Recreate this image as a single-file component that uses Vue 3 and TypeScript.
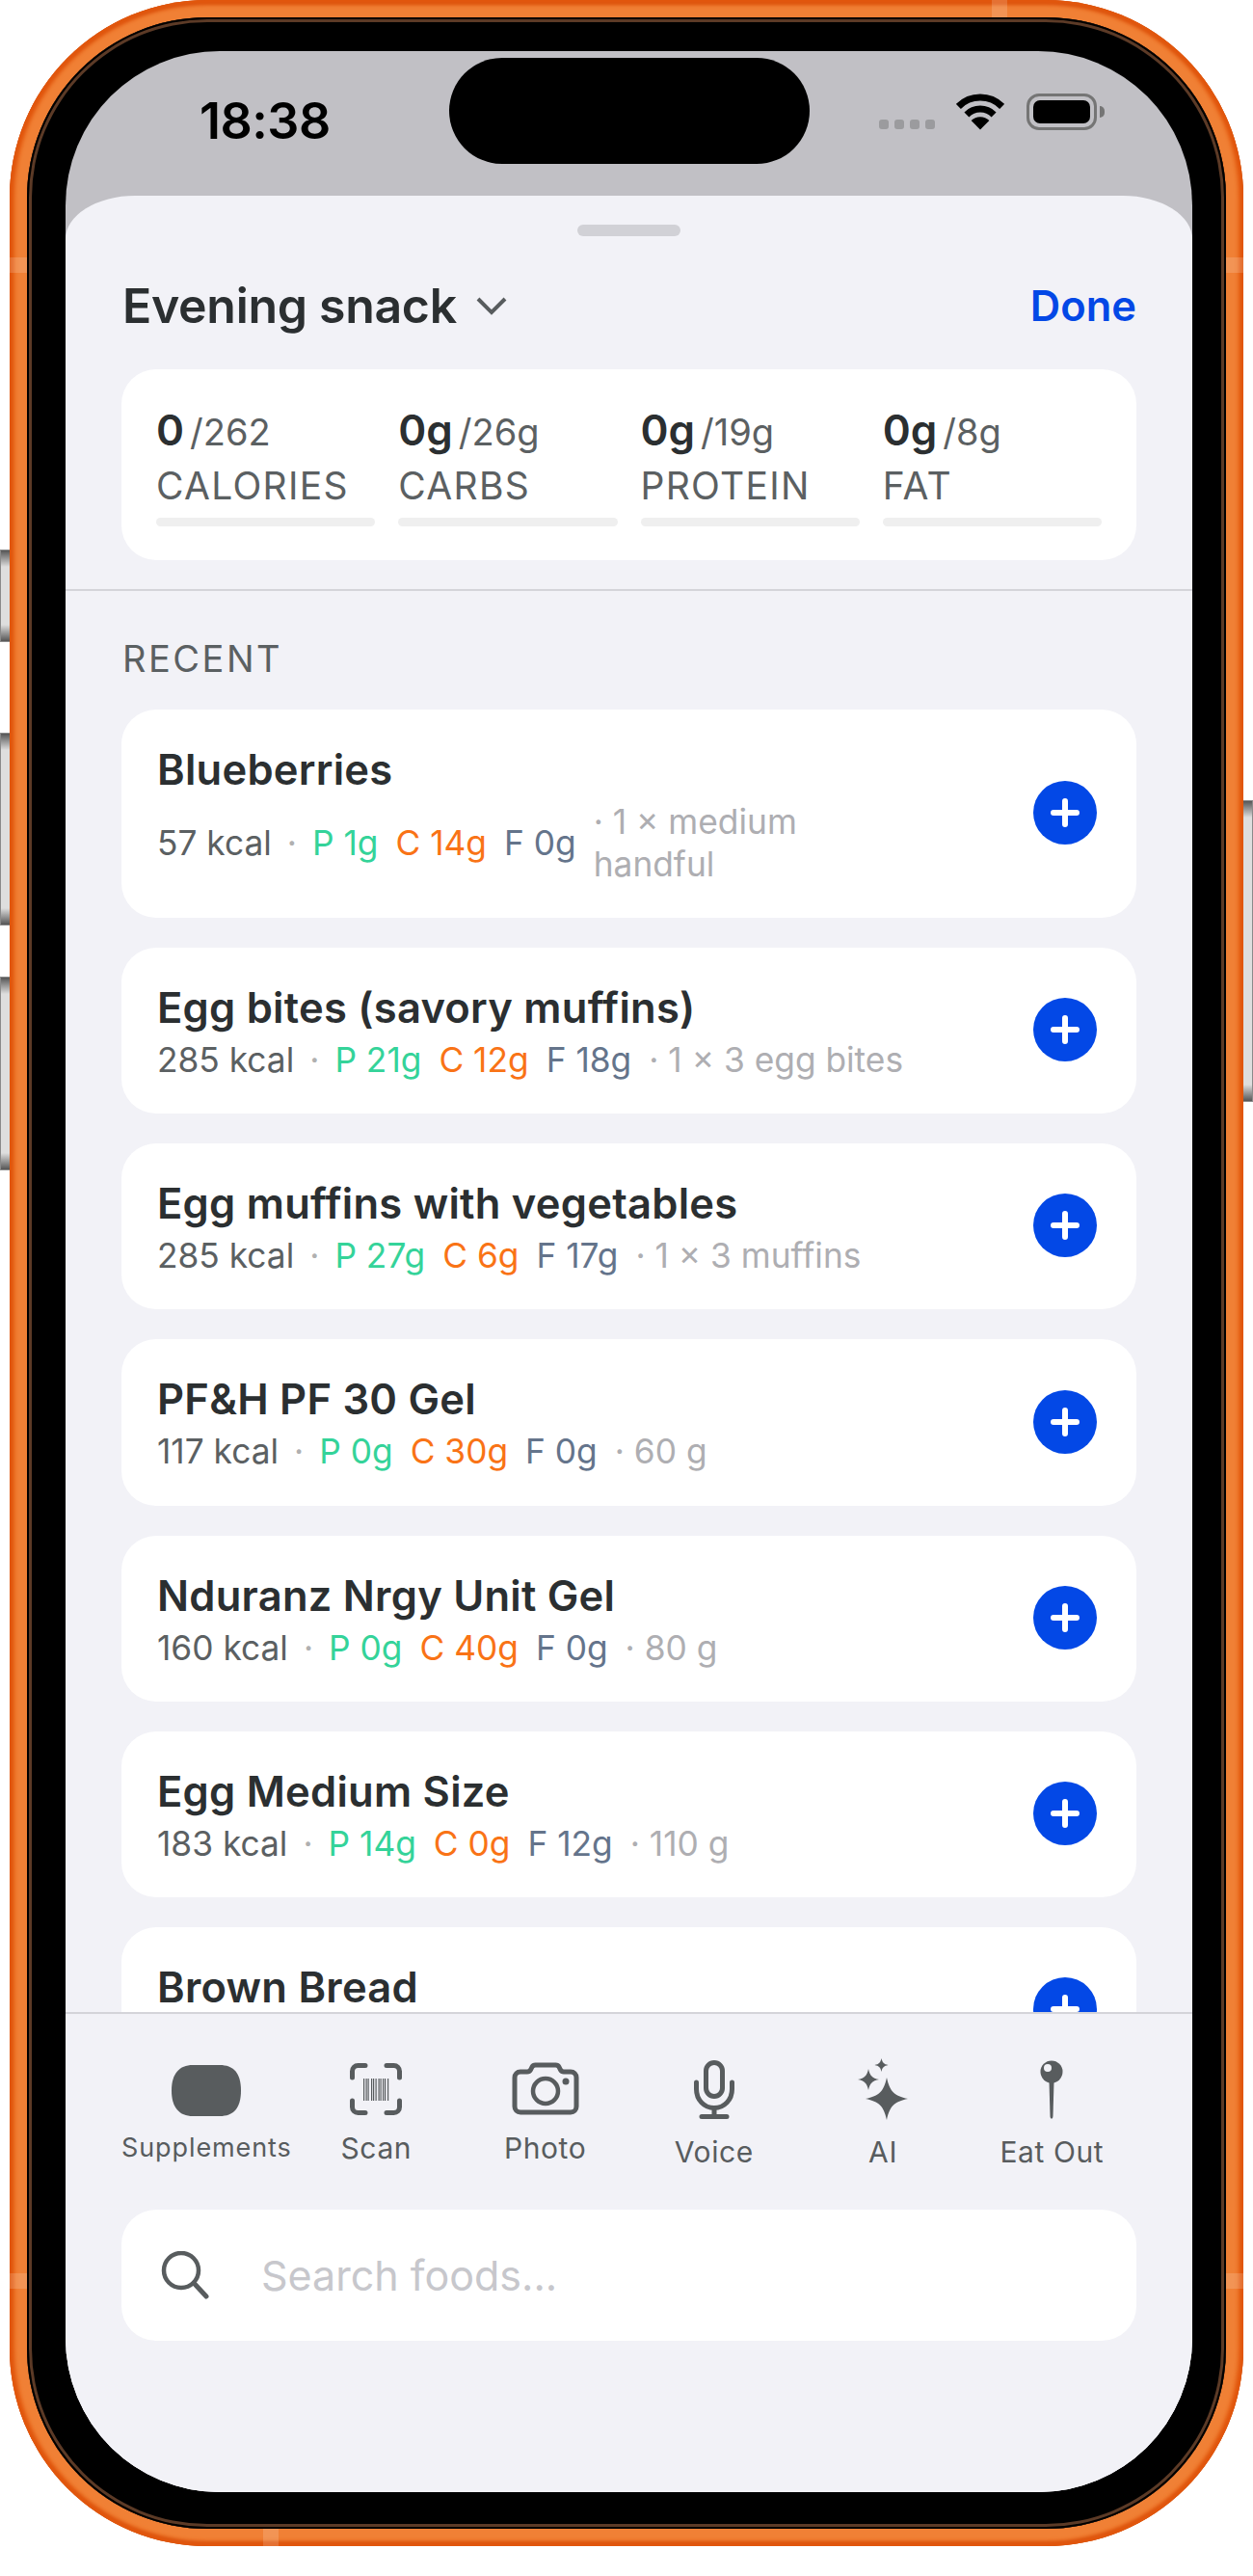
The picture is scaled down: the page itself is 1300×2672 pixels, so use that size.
<script setup lang="ts">
interface Food {
    name: string;
    kcal: number;
    p: number;
    c: number;
    f: number;
    serving: string;
}

const macros = [
    { value: "0", goal: "/262", label: "CALORIES" },
    { value: "0g", goal: "/26g", label: "CARBS" },
    { value: "0g", goal: "/19g", label: "PROTEIN" },
    { value: "0g", goal: "/8g", label: "FAT" },
];

const foods: Food[] = [
    { name: "Blueberries", kcal: 57, p: 1, c: 14, f: 0, serving: "1 × medium handful" },
    { name: "Egg bites (savory muffins)", kcal: 285, p: 21, c: 12, f: 18, serving: "1 × 3 egg bites" },
    { name: "Egg muffins with vegetables", kcal: 285, p: 27, c: 6, f: 17, serving: "1 × 3 muffins" },
    { name: "PF&H PF 30 Gel", kcal: 117, p: 0, c: 30, f: 0, serving: "60 g" },
    { name: "Nduranz Nrgy Unit Gel", kcal: 160, p: 0, c: 40, f: 0, serving: "80 g" },
    { name: "Egg Medium Size", kcal: 183, p: 14, c: 0, f: 12, serving: "110 g" },
    { name: "Brown Bread", kcal: 120, p: 4, c: 22, f: 1, serving: "1 × slice" },
];

const tools = [
    { key: "supplements", label: "Supplements", tall: false },
    { key: "scan", label: "Scan", tall: false },
    { key: "photo", label: "Photo", tall: false },
    { key: "voice", label: "Voice", tall: true },
    { key: "ai", label: "AI", tall: true },
    { key: "eat", label: "Eat Out", tall: true },
];

const barcode = [0, 2.5, 4.5, 8, 10, 12.5, 15.5, 17.5, 20, 22, 25];

function star(x: number, y: number, r: number): string {
    const k = r * 0.14;
    const q = r * 0.35;
    return `M${x} ${y - r}C${x + k} ${y - q} ${x + q} ${y - k} ${x + r} ${y}C${x + q} ${y + k} ${x + k} ${y + q} ${x} ${y + r}C${x - k} ${y + q} ${x - q} ${y + k} ${x - r} ${y}C${x - q} ${y - k} ${x - k} ${y - q} ${x} ${y - r}z`;
}
</script>

<template>
    <div class="page">
        <div class="device">
            <span class="side-btn left" style="top: 570px; height: 96px"></span>
            <span class="side-btn left" style="top: 760px; height: 200px"></span>
            <span class="side-btn left" style="top: 1013px; height: 201px"></span>
            <span class="side-btn right" style="top: 830px; height: 313px"></span>

            <div class="phone">
                <span class="band" style="left: 0; top: 267px; width: 18px; height: 16px"></span>
                <span class="band" style="right: 0; top: 267px; width: 18px; height: 16px"></span>
                <span class="band" style="left: 0; top: 2358px; width: 18px; height: 16px"></span>
                <span class="band" style="right: 0; top: 2358px; width: 18px; height: 16px"></span>
                <span class="band" style="left: 1019px; top: 0; width: 16px; height: 18px"></span>
                <span class="band" style="left: 263px; bottom: 0; width: 16px; height: 18px"></span>

                <div class="bezel">
                    <div class="screen">
                        <div class="status">
                            <span class="time">18:38</span>
                            <div class="island"></div>
                            <div class="status-icons">
                                <div class="signal"><i></i><i></i><i></i><i></i></div>
                                <svg class="wifi" width="50" height="38" viewBox="0 0 50 38">
                                    <path d="M2.4 13.4A32 32 0 0 1 47.6 13.4" fill="none" stroke="#000" stroke-width="7" />
                                    <path d="M10.9 21.9A20 20 0 0 1 39.1 21.9" fill="none" stroke="#000" stroke-width="7" />
                                    <path d="M25 37.5L15.6 28A13.5 13.5 0 0 1 34.4 28z" fill="#000" />
                                </svg>
                                <div class="battery"><div class="battery-fill"></div></div>
                                <span class="battery-nub"></span>
                            </div>
                        </div>

                        <div class="sheet">
                            <header class="sheet-head">
                                <div class="handle"></div>
                                <div class="title-row">
                                    <div class="title">
                                        <span>Evening snack</span>
                                        <svg width="32" height="20" viewBox="0 0 32 20">
                                            <path d="M2 3l14 14L30 3" fill="none" stroke="#585c5e" stroke-width="4" />
                                        </svg>
                                    </div>
                                    <span class="done">Done</span>
                                </div>
                                <div class="summary">
                                    <div v-for="m in macros" :key="m.label" class="macro">
                                        <div class="macro-value"><b>{{ m.value }}</b><span>{{ m.goal }}</span></div>
                                        <div class="macro-label">{{ m.label }}</div>
                                        <div class="macro-bar"></div>
                                    </div>
                                </div>
                            </header>

                            <div class="list">
                                <div class="section-title">RECENT</div>
                                <div class="rows">
                                    <div v-for="food in foods" :key="food.name" class="food">
                                        <div class="food-text">
                                            <div class="food-name">{{ food.name }}</div>
                                            <div class="food-meta">
                                                <span class="kcal">{{ food.kcal }} kcal</span>
                                                <span class="sep">·</span>
                                                <span class="p">P {{ food.p }}g</span>
                                                <span class="c">C {{ food.c }}g</span>
                                                <span class="f">F {{ food.f }}g</span>
                                                <span class="serving">· {{ food.serving }}</span>
                                            </div>
                                        </div>
                                        <div class="add">
                                            <svg width="30" height="30" viewBox="0 0 30 30">
                                                <path d="M15 3v24M3 15h24" stroke="#fff" stroke-width="6" stroke-linecap="round" />
                                            </svg>
                                        </div>
                                    </div>
                                </div>
                            </div>

                            <footer class="bottom">
                                <div class="tools">
                                    <div v-for="t in tools" :key="t.key" class="tool" :class="{ tall: t.tall }">
                                        <svg width="72" height="64" viewBox="0 0 72 64" class="tool-icon">
                                            <path v-if="t.key === 'supplements'" d="M22 7h28c14 0 22 8 22 26.5S64 60 50 60H22C8 60 0 51 0 33.5S8 7 22 7z" fill="#585c5e" />
                                            <g v-else-if="t.key === 'scan'">
                                                <path d="M11.5 20v-6.5c0-3.5 2.5-6 6-6H25M47 7.5h7.5c3.5 0 6 2.5 6 6V20M60.5 44v6.5c0 3.5-2.5 6-6 6H47M25 56.5h-7.5c-3.5 0-6-2.5-6-6V44" fill="none" stroke="#585c5e" stroke-width="5" stroke-linecap="round" />
                                                <rect v-for="x in barcode" :key="x" :x="23 + x" y="21" width="1.2" height="23" fill="#585c5e" />
                                            </g>
                                            <g v-else-if="t.key === 'photo'">
                                                <path d="M10 14h7c1.6 0 2.7-.7 3.5-2l1.5-3c.8-1.4 1.9-2 3.5-2h21c1.6 0 2.7.6 3.5 2l1.5 3c.8 1.3 1.9 2 3.5 2h7c3.5 0 6 2.5 6 6v30c0 3.5-2.5 6-6 6H10c-3.5 0-6-2.5-6-6V20c0-3.5 2.5-6 6-6z" fill="none" stroke="#585c5e" stroke-width="5" stroke-linejoin="round" />
                                                <circle cx="36" cy="34" r="13" fill="none" stroke="#585c5e" stroke-width="4.5" />
                                                <circle cx="57" cy="24" r="3.5" fill="#585c5e" />
                                            </g>
                                            <g v-else-if="t.key === 'voice'">
                                                <rect x="27.5" y="4.5" width="17" height="35" rx="8.5" fill="none" stroke="#585c5e" stroke-width="5" />
                                                <path d="M17.5 25v7c0 11 8 19.5 18.5 19.5S54.5 43 54.5 32v-7M36 51.5V60M23 60.5h26" fill="none" stroke="#585c5e" stroke-width="5" stroke-linecap="round" />
                                            </g>
                                            <g v-else-if="t.key === 'ai'" fill="#585c5e">
                                                <path :d="star(40, 42, 22)" />
                                                <path :d="star(21, 22, 11)" />
                                                <path :d="star(34.5, 7, 7)" />
                                            </g>
                                            <g v-else>
                                                <circle cx="36" cy="14" r="11.5" fill="#585c5e" />
                                                <circle cx="32" cy="10" r="4" fill="#f2f2f7" />
                                                <path d="M33.5 24h5L37.5 60c-.3 3.5-2.7 3.5-3 0z" fill="#585c5e" />
                                            </g>
                                        </svg>
                                        <span class="tool-label" :class="{ small: t.key === 'supplements' }">{{ t.label }}</span>
                                    </div>
                                </div>
                                <div class="search">
                                    <svg width="50" height="50" viewBox="0 0 50 50">
                                        <circle cx="21" cy="20" r="18" fill="none" stroke="#585c5e" stroke-width="4.5" />
                                        <path d="M34 33l13 14" stroke="#585c5e" stroke-width="5" stroke-linecap="round" />
                                    </svg>
                                    <span class="placeholder">Search foods...</span>
                                </div>
                            </footer>
                        </div>
                    </div>
                </div>
            </div>
        </div>
    </div>
</template>

<style>
html,
body {
    margin: 0;
    background: #fff;
}
</style>

<style scoped>
.page {
    width: 1300px;
    height: 2672px;
    overflow: hidden;
    font-family: Inter, "Noto Sans", sans-serif;
    background: #fff;
}

.device {
    position: relative;
    width: 1300px;
    height: 2641px;
}

.side-btn {
    position: absolute;
    width: 10px;
    box-sizing: border-box;
    border: 1px solid #8a8a8a;
    background: linear-gradient(#555 0, #dedede 17px, #dedede calc(100% - 17px), #555 100%);
}

.side-btn.left {
    left: 0;
    border-right: 0;
}

.side-btn.right {
    left: 1290px;
    border-left: 0;
}

.phone {
    position: absolute;
    left: 10px;
    top: 0;
    width: 1280px;
    height: 2641px;
    box-sizing: border-box;
    padding: 18px;
    border-radius: 205px;
    background: #f08035;
    box-shadow: inset 0 0 4px 5px #e2570d, inset 0 3px 3px 1px #cc4e14, inset 0 -3px 3px 1px #cc4e14;
}

.band {
    position: absolute;
    background: rgb(255 255 255 / 0.16);
}

.bezel {
    height: 100%;
    box-sizing: border-box;
    padding: 35px 35px 38px 40px;
    border-radius: 187px;
    background: #000;
    box-shadow: inset 0 0 0 2px #000, inset 0 0 0 5px #5c3a26;
}

.screen {
    position: relative;
    display: flex;
    flex-direction: column;
    height: 100%;
    overflow: hidden;
    border-radius: 160px;
    background: #c1c0c5;
}

.status {
    position: relative;
    flex: none;
    height: 150px;
}

.time {
    position: absolute;
    left: 139px;
    top: 43px;
    font-size: 52px;
    line-height: 60px;
    font-weight: 600;
    color: #000;
    letter-spacing: -0.5px;
}

.island {
    position: absolute;
    left: 398px;
    top: 7px;
    width: 374px;
    height: 110px;
    border-radius: 55px;
    background: #000;
}

.status-icons {
    position: absolute;
    left: 844px;
    top: 44px;
    display: flex;
    align-items: flex-start;
}

.signal {
    display: flex;
    gap: 6px;
    margin-top: 27px;
}

.signal i {
    width: 10px;
    height: 10px;
    border-radius: 3px;
    background: #9b9b9e;
}

.wifi {
    margin-left: 22px;
}

.battery {
    box-sizing: border-box;
    width: 73px;
    height: 38px;
    margin-left: 23px;
    padding: 4px;
    border: 3px solid #757575;
    border-radius: 13px;
}

.battery-fill {
    height: 100%;
    border-radius: 7px;
    background: #000;
}

.battery-nub {
    width: 5px;
    height: 12px;
    margin: 13px 0 0 3px;
    border-radius: 0 6px 6px 0;
    background: #757575;
}

.sheet {
    flex: 1;
    min-height: 0;
    display: flex;
    flex-direction: column;
    border-radius: 72px 72px 0 0 / 45px 45px 0 0;
    background: #f2f2f7;
}

.sheet-head {
    flex: none;
    height: 410px;
    box-sizing: border-box;
    padding: 30px 58px 0;
    border-bottom: 2px solid #d4d4d9;
}

.handle {
    width: 107px;
    height: 12px;
    margin: 0 auto;
    border-radius: 6px;
    background: #d1d1d6;
}

.title-row {
    display: flex;
    align-items: center;
    justify-content: space-between;
    height: 60px;
    margin-top: 42px;
}

.title {
    display: flex;
    align-items: center;
    gap: 20px;
    padding-left: 1px;
    font-size: 50px;
    font-weight: 600;
    letter-spacing: -0.3px;
    color: #2b2f31;
}

.done {
    font-size: 43.5px;
    font-weight: 600;
    color: #0348e6;
}

.summary {
    display: grid;
    grid-template-columns: repeat(4, 1fr);
    gap: 24px;
    height: 198px;
    box-sizing: border-box;
    margin-top: 36px;
    padding: 37px 36px 0;
    border-radius: 36px;
    background: #fff;
}

.macro-value {
    display: flex;
    align-items: baseline;
    height: 52px;
    line-height: 52px;
    color: #5b6062;
    font-size: 38px;
}

.macro-value b {
    margin-right: 6px;
    font-size: 44px;
    font-weight: 600;
    color: #2b2f31;
}

.macro-label {
    margin-top: 8px;
    font-size: 39px;
    line-height: 48px;
    letter-spacing: 1.3px;
    color: #5b6062;
}

.macro-bar {
    height: 9px;
    margin-top: 9px;
    border-radius: 5px;
    background: #efefef;
}

.list {
    flex: 1;
    min-height: 0;
    overflow: hidden;
    padding: 46px 58px 0;
}

.section-title {
    margin-bottom: 29px;
    padding-left: 1px;
    font-size: 38px;
    line-height: 48px;
    letter-spacing: 2.5px;
    color: #5b6062;
}

.rows {
    display: flex;
    flex-direction: column;
    gap: 31px;
}

.food {
    display: flex;
    align-items: center;
    padding: 32px 41px 33.75px 37px;
    border-radius: 36px;
    background: #fff;
}

.food-text {
    flex: 1;
    min-width: 0;
    margin-right: 120px;
}

.food-name {
    font-size: 43.5px;
    line-height: 60px;
    font-weight: 600;
    letter-spacing: 0.25px;
    color: #2b2f31;
    white-space: nowrap;
}

.food-meta {
    display: flex;
    align-items: center;
    margin-top: 3px;
    font-size: 35.3px;
    line-height: 43.5px;
    white-space: nowrap;
}

.kcal {
    color: #5b6062;
}

.sep {
    margin: 0 16px;
    color: #b0b0b0;
}

.p {
    color: #34d399;
    margin-right: 18px;
}

.c {
    color: #f97316;
    margin-right: 18px;
}

.f {
    color: #64748b;
    margin-right: 18px;
}

.serving {
    flex: 0 1 auto;
    min-width: 0;
    white-space: normal;
    color: #aeaeb2;
}

.add {
    flex: none;
    display: flex;
    align-items: center;
    justify-content: center;
    width: 66px;
    height: 66px;
    border-radius: 50%;
    background: #0348e6;
}

.bottom {
    flex: none;
    position: relative;
    height: 498px;
    box-sizing: border-box;
    padding: 0 58px;
    border-top: 2px solid #d4d4d9;
    background: #f2f2f7;
}

.tools {
    display: grid;
    grid-template-columns: repeat(6, 1fr);
    height: 203px;
    padding-top: 46px;
    box-sizing: border-box;
}

.tool {
    display: flex;
    flex-direction: column;
    align-items: center;
}

.tool-icon {
    flex: none;
}

.tool-label {
    margin-top: 11px;
    font-size: 30px;
    line-height: 36px;
    letter-spacing: 0.6px;
    color: #585c5e;
    white-space: nowrap;
}

.tool-label.small {
    font-size: 27px;
    letter-spacing: 0.9px;
}

.tool.tall .tool-label {
    margin-top: 15px;
}

.search {
    display: flex;
    align-items: center;
    height: 136px;
    box-sizing: border-box;
    padding-left: 41px;
    border-radius: 36px;
    background: #fff;
}

.placeholder {
    margin-left: 54px;
    font-size: 43px;
    color: #c7c7cc;
}
</style>
